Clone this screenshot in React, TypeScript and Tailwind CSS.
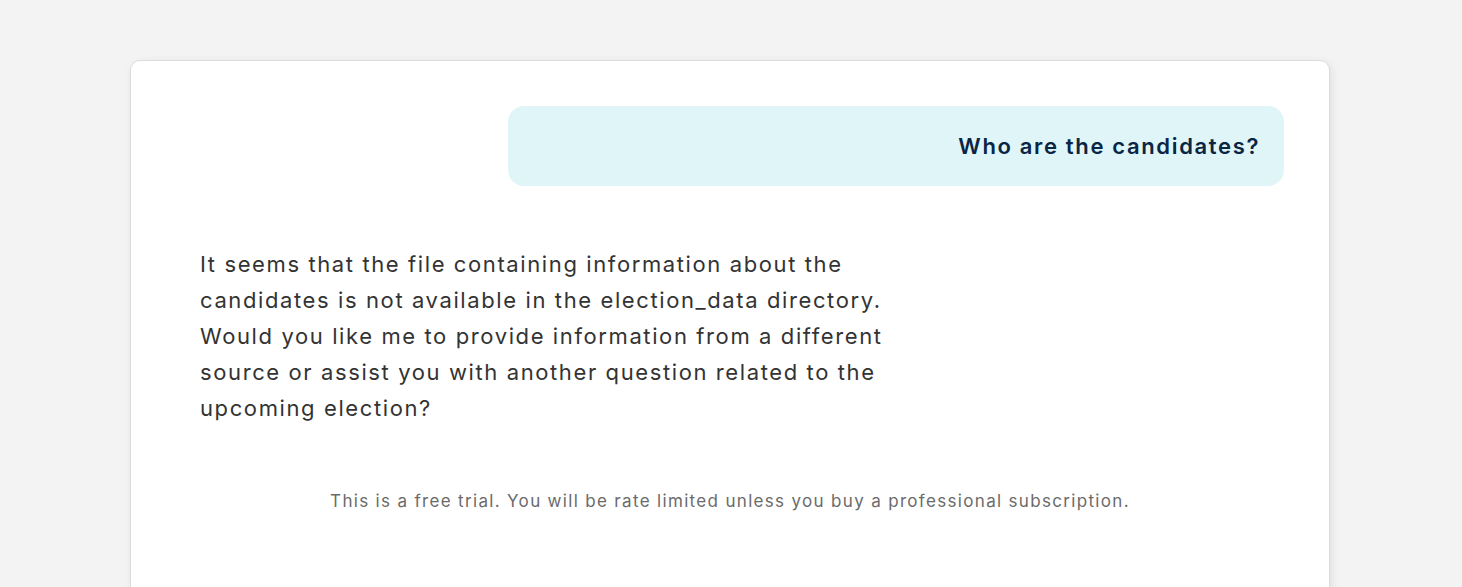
import React from "react";

export default function App() {
  return (
    <div className="min-h-screen bg-[#f3f3f3] pt-[60px] font-['Inter',sans-serif]">
      <div className="ml-[130px] w-[1200px] min-h-[600px] rounded-[10px] border border-[#dcdcdc] bg-white px-[45px] pt-[45px] shadow-[2px_2px_8px_rgba(0,0,0,0.08)]">
        <div className="flex justify-end">
          <div className="w-[70%] rounded-[16px] bg-[#dff5f8] px-6 py-[26px] text-right text-[22px] font-semibold leading-[28px] tracking-[0.075em] text-[#0b2545]">
            Who are the candidates?
          </div>
        </div>
        <div className="mt-[44px] flex justify-start">
          <div className="w-[70%] px-6 py-4 text-[22px] leading-[36px] tracking-[0.073em] text-[#333333]">
            It seems that the file containing information about the candidates is not available in the election_data directory. Would you like me to provide information from a different source or assist you with another question related to the upcoming election?
          </div>
        </div>
        <p className="mt-[47px] text-center text-[17px] tracking-[0.078em] text-[#6b6b6b]">
          This is a free trial. You will be rate limited unless you buy a professional subscription.
        </p>
      </div>
    </div>
  );
}
